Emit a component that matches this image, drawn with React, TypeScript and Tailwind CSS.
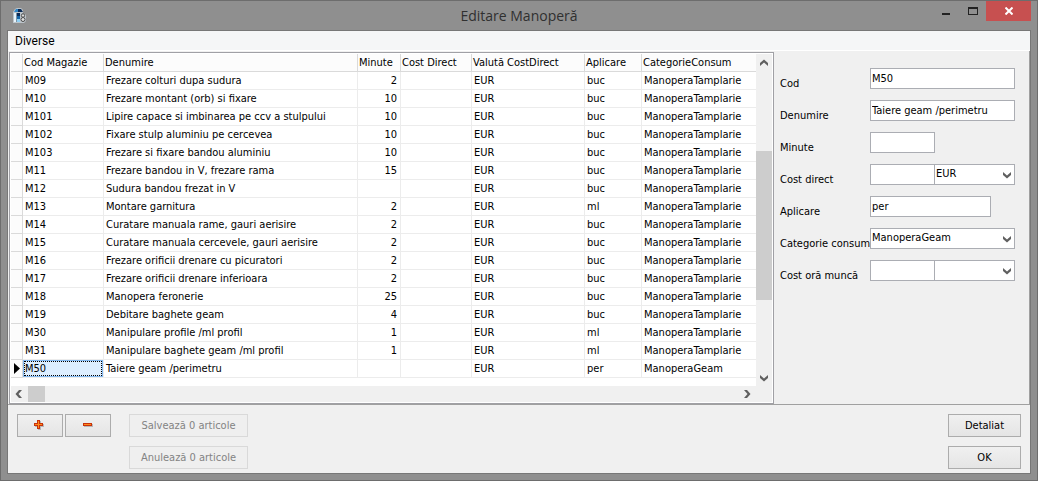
import React, { useState } from 'react';
import clsx from 'clsx';

interface LaborItem {
  code: string;
  name: string;
  minutes?: number;
  unit: string;
  category: string;
}

const TAMPLARIE = 'ManoperaTamplarie';

const items: LaborItem[] = [
  { code: 'M09', name: 'Frezare colturi dupa sudura', minutes: 2, unit: 'buc', category: TAMPLARIE },
  { code: 'M10', name: 'Frezare montant (orb) si fixare', minutes: 10, unit: 'buc', category: TAMPLARIE },
  { code: 'M101', name: 'Lipire capace si imbinarea pe ccv a stulpului', minutes: 10, unit: 'buc', category: TAMPLARIE },
  { code: 'M102', name: 'Fixare stulp aluminiu pe cercevea', minutes: 10, unit: 'buc', category: TAMPLARIE },
  { code: 'M103', name: 'Frezare si fixare bandou aluminiu', minutes: 10, unit: 'buc', category: TAMPLARIE },
  { code: 'M11', name: 'Frezare bandou in V, frezare rama', minutes: 15, unit: 'buc', category: TAMPLARIE },
  { code: 'M12', name: 'Sudura bandou frezat in V', unit: 'buc', category: TAMPLARIE },
  { code: 'M13', name: 'Montare garnitura', minutes: 2, unit: 'ml', category: TAMPLARIE },
  { code: 'M14', name: 'Curatare manuala rame, gauri aerisire', minutes: 2, unit: 'buc', category: TAMPLARIE },
  { code: 'M15', name: 'Curatare manuala cercevele, gauri aerisire', minutes: 2, unit: 'buc', category: TAMPLARIE },
  { code: 'M16', name: 'Frezare orificii drenare cu picuratori', minutes: 2, unit: 'buc', category: TAMPLARIE },
  { code: 'M17', name: 'Frezare orificii drenare inferioara', minutes: 2, unit: 'buc', category: TAMPLARIE },
  { code: 'M18', name: 'Manopera feronerie', minutes: 25, unit: 'buc', category: TAMPLARIE },
  { code: 'M19', name: 'Debitare baghete geam', minutes: 4, unit: 'buc', category: TAMPLARIE },
  { code: 'M30', name: 'Manipulare profile /ml profil', minutes: 1, unit: 'ml', category: TAMPLARIE },
  { code: 'M31', name: 'Manipulare baghete geam /ml profil', minutes: 1, unit: 'ml', category: TAMPLARIE },
  { code: 'M50', name: 'Taiere geam /perimetru', unit: 'per', category: 'ManoperaGeam' },
];

const columns = ['Cod Magazie', 'Denumire', 'Minute', 'Cost Direct', 'Valută CostDirect', 'Aplicare', 'CategorieConsum'];

const inputClass = 'h-[21px] border border-[#abadb3] bg-white px-px pb-px outline-none';
const buttonClass = 'flex h-[23px] items-center justify-center border border-[#acacac] bg-linear-to-b from-[#f0f0f0] to-[#e5e5e5]';

const chevronRotation = { down: '', up: 'rotate-180', left: 'rotate-90', right: '-rotate-90' };

const Chevron: React.FC<{ dir: keyof typeof chevronRotation }> = ({ dir }) => (
  <svg viewBox="0 0 8 8" className={clsx('size-2 shrink-0', chevronRotation[dir])} aria-hidden="true">
    <path d="M0 1v3L4 7.500l4-3.500V1L4 4.500z" fill="#606060" />
  </svg>
);

const AppIcon = () => (
  <svg viewBox="0 0 14 17" className="h-[17px] w-[14px]" aria-hidden="true">
    <path d="M0 5L2 2L4 1H8L10 3V6L13 8V14L11 16H0z" fill="#bcc4ca" />
    <path d="M1 5L3 2H5V5z" fill="#2f86c8" />
    <path d="M5 2H8L10 5H5z" fill="#0b2c58" />
    <path d="M1 6h2v9H1z" fill="#e8f4fb" />
    <path d="M3 6h1v9H3z" fill="#7d93a3" />
    <path d="M4 6h3v3H4z" fill="#0b2c58" />
    <path d="M4 9h3v3H4z" fill="#1565a8" />
    <path d="M4 12h3v3H4z" fill="#8fd0f5" />
    <ellipse cx="10" cy="8.5" rx="1.6" ry="1.8" fill="#ddd" stroke="#4a4a4a" />
    <ellipse cx="10" cy="12.500" rx="2" ry="2" fill="#ddd" stroke="#4a4a4a" />
  </svg>
);

const TitleBar = () => (
  <header className="grid h-[29px] grid-cols-[1fr_auto_1fr] items-start">
    <div className="pt-[6px] pl-[6px]"><AppIcon /></div>
    <h1 className="pt-1 font-['Open_Sans',sans-serif] text-[14px] leading-[22px] text-[#303030]">Editare Manoperă</h1>
    <div className="flex justify-end">
      <button type="button" aria-label="Minimizare" className="flex h-5 w-[27px] items-center justify-center">
        <svg viewBox="0 0 8 10" className="h-[10px] w-2"><path d="M0 7h8v2H0z" fill="#222" /></svg>
      </button>
      <button type="button" aria-label="Maximizare" className="flex h-5 w-[27px] items-center justify-center">
        <svg viewBox="0 0 10 8" className="h-2 w-[10px]"><path d="M0 0h10v8H0zM1 2v5h8V2z" fill="#222" fillRule="evenodd" /></svg>
      </button>
      <button type="button" aria-label="Închidere" className="flex h-5 w-[45px] items-center justify-center bg-[#c75050]">
        <svg viewBox="0 0 8 8" className="size-2"><path d="M.5 .5l7 7M7.500 .5l-7 7" stroke="#fff" strokeWidth="2" /></svg>
      </button>
    </div>
  </header>
);

const LaborTable: React.FC<{ selected: string; onSelect: (code: string) => void }> = ({ selected, onSelect }) => (
  <table className="w-full table-fixed border-separate border-spacing-0 text-left leading-4">
    <colgroup>
      <col className="w-3" />
      <col className="w-[81px]" />
      <col />
      <col className="w-[43px]" />
      <col className="w-[71px]" />
      <col className="w-[113px]" />
      <col className="w-[57px]" />
      <col className="w-[114px]" />
    </colgroup>
    <thead>
      <tr className="bg-[#fcfcfc]">
        <th className="h-[18px] border-r border-b border-[#dadada] p-0" />
        {columns.map(col => (
          <th key={col} className="h-[18px] border-r border-b border-[#dadada] p-0 pt-px pl-px font-normal whitespace-nowrap last:border-r-0">{col}</th>
        ))}
      </tr>
    </thead>
    <tbody>
      {items.map(item => {
        const active = item.code === selected;
        const cell = 'h-[18px] border-r border-b border-[#ececec] p-0 pt-px pl-[2px] whitespace-nowrap';
        return (
          <tr key={item.code} onClick={() => onSelect(item.code)}>
            <td className="h-[18px] border-r border-b border-[#dadada] bg-[#fcfcfc] p-0 pl-[3px]">
              {active && (
                <svg viewBox="0 0 6 11" className="h-[11px] w-[6px]" aria-hidden="true"><path d="M0 0l6 5.5L0 11z" /></svg>
              )}
            </td>
            <td className={clsx('h-[18px] border-r border-b border-[#ececec] p-0 whitespace-nowrap', !active && 'pt-px pl-[2px]')}>
              {active ? (
                <div className="border border-[#84b9f0] bg-[#def]">
                  <div className="h-[15px] border border-dotted border-black leading-[14px]">{item.code}</div>
                </div>
              ) : item.code}
            </td>
            <td className={cell}>{item.name}</td>
            <td className="h-[18px] border-r border-b border-[#ececec] p-0 pt-px pr-[3px] text-right">{item.minutes}</td>
            <td className={cell} />
            <td className={cell}>EUR</td>
            <td className={cell}>{item.unit}</td>
            <td className="h-[18px] border-b border-[#ececec] p-0 pt-px pl-[2px] whitespace-nowrap">{item.category}</td>
          </tr>
        );
      })}
    </tbody>
  </table>
);

const Field: React.FC<{ label: string; htmlFor: string; children: React.ReactNode }> = ({ label, htmlFor, children }) => (
  <div className="flex h-[21px]">
    <label htmlFor={htmlFor} className="w-[90px] shrink-0 pt-[9px] leading-[14px] whitespace-nowrap">{label}</label>
    {children}
  </div>
);

interface DropDownProps {
  id?: string;
  label?: string;
  value: string;
  options: string[];
  className?: string;
}

const DropDown: React.FC<DropDownProps> = ({ id, label, value, options, className }) => (
  <div className={clsx('relative', className)}>
    <select id={id} aria-label={label} defaultValue={value} className={clsx(inputClass, 'w-full appearance-none')}>
      {options.map(opt => <option key={opt} value={opt}>{opt}</option>)}
    </select>
    <span className="pointer-events-none absolute inset-y-0 right-1 flex items-center"><Chevron dir="down" /></span>
  </div>
);

const App: React.FC = () => {
  const [selected, setSelected] = useState('M50');
  const current = items.find(item => item.code === selected) ?? items[0];

  return (
    <div className="flex min-h-screen flex-col border border-[#6d6d6d] bg-[#8f8f8f] px-[6px] pb-[6px] font-['DejaVu_Sans_Condensed','DejaVu_Sans',sans-serif] text-[11px] leading-[14px] text-black">
      <TitleBar />
      <div className="flex flex-1 flex-col border border-[#777] bg-[#f0f0f0]">
        <nav className="flex h-5 items-center border-b border-white bg-[#f5f6f7] px-[7px]">
          <button type="button" className="font-[Roboto,sans-serif] text-[12px]">Diverse</button>
        </nav>

        <main key={selected} className="flex flex-1 border-b border-[#a0a0a0]">
          <div className="mt-px ml-px flex min-w-0 flex-1 flex-col border border-[#a0a0a5] bg-white p-px">
            <div className="flex flex-1">
              <div className="min-w-0 flex-1 pb-2">
                <LaborTable selected={selected} onSelect={setSelected} />
              </div>
              <div className="flex w-4 flex-col items-center bg-[#f0f0f0]">
                <div className="flex h-[17px] items-center"><Chevron dir="up" /></div>
                <div className="flex w-full flex-1 flex-col">
                  <div className="flex-[80]" />
                  <div className="flex-[150] bg-[#cdcdcd]" />
                  <div className="flex-[69]" />
                </div>
                <div className="flex h-[17px] items-center"><Chevron dir="down" /></div>
              </div>
            </div>
            <div className="flex h-4 items-center bg-[#f0f0f0] pr-[21px] pl-1">
              <Chevron dir="left" />
              <div className="ml-[5px] h-full w-[17px] bg-[#cdcdcd]" />
              <div className="flex-1" />
              <Chevron dir="right" />
            </div>
          </div>

          <form className="flex w-[256px] shrink-0 flex-col gap-[11px] border-r border-[#a0a0a0] pt-[17px] pr-[14px] pl-[6px]">
            <Field label="Cod" htmlFor="cod">
              <input id="cod" defaultValue={current.code} className={clsx(inputClass, 'min-w-0 flex-1')} />
            </Field>
            <Field label="Denumire" htmlFor="denumire">
              <input id="denumire" defaultValue={current.name} className={clsx(inputClass, 'min-w-0 flex-1')} />
            </Field>
            <Field label="Minute" htmlFor="minute">
              <input id="minute" defaultValue={current.minutes} className={clsx(inputClass, 'w-[65px]')} />
            </Field>
            <Field label="Cost direct" htmlFor="cost-direct">
              <input id="cost-direct" className={clsx(inputClass, 'w-[65px]')} />
              <DropDown label="Valută cost direct" value="EUR" options={['', 'EUR', 'RON']} className="-ml-px flex-1" />
            </Field>
            <Field label="Aplicare" htmlFor="aplicare">
              <input id="aplicare" defaultValue={current.unit} className={clsx(inputClass, 'w-[121px]')} />
            </Field>
            <Field label="Categorie consum" htmlFor="categorie">
              <DropDown id="categorie" value={current.category} options={['ManoperaGeam', TAMPLARIE]} className="flex-1" />
            </Field>
            <Field label="Cost oră muncă" htmlFor="cost-ora">
              <input id="cost-ora" className={clsx(inputClass, 'w-[65px]')} />
              <DropDown label="Valută cost oră" value="" options={['', 'EUR', 'RON']} className="-ml-px flex-1" />
            </Field>
          </form>
        </main>

        <footer className="flex items-start px-[9px] pt-[9px] pb-1">
          <div className="flex gap-[2px]">
            <button type="button" aria-label="Adaugă" className={clsx(buttonClass, 'w-[46px]')}>
              <svg viewBox="0 0 12 11" className="h-[11px] w-3">
                <path d="M4 1h3v3h3v3H7v3H4V7H1V4h3z" fill="#b8b8b8" />
                <path d="M3 0h3v3h3v3H6v3H3V6H0V3h3z" fill="#c8320a" />
                <path d="M4 1h1v3h3v1H5v3H4V5H1V4h3z" fill="#ff8a1c" />
              </svg>
            </button>
            <button type="button" aria-label="Șterge" className={clsx(buttonClass, 'w-[46px]')}>
              <svg viewBox="0 0 12 11" className="h-[11px] w-3">
                <path d="M2 4h9v3H2z" fill="#b8b8b8" />
                <path d="M1 3h9v3H1z" fill="#c8320a" />
                <path d="M2 4h7v1H2z" fill="#ff8a1c" />
              </svg>
            </button>
          </div>
          <div className="ml-[18px] flex w-[119px] flex-col gap-[9px]">
            <button type="button" disabled className="h-[23px] border border-[#d9d9d9] bg-[#efefef] text-[#838383]">Salvează 0 articole</button>
            <button type="button" disabled className="h-[23px] border border-[#d9d9d9] bg-[#efefef] text-[#838383]">Anulează 0 articole</button>
          </div>
          <div className="ml-auto flex w-[73px] flex-col gap-[9px]">
            <button type="button" className={buttonClass}>Detaliat</button>
            <button type="button" className={buttonClass}>OK</button>
          </div>
        </footer>
      </div>
    </div>
  );
};

export default App;
